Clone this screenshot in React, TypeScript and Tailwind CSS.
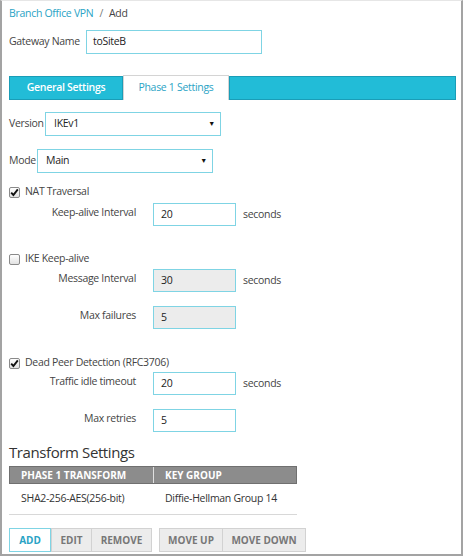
import React from "react";

const font = { fontFamily: '"Open Sans", "Noto Sans", sans-serif' };

function Check({ checked }: { checked: boolean }) {
    return (
        <span className="w-[11px] h-[11px] border border-[#8a8a8a] rounded-[2px] bg-gradient-to-b from-white to-[#e2e2e2] flex items-center justify-center">
            {checked && (
                <svg width="9" height="9" viewBox="0 0 9 9">
                    <path d="M1.2 4.6 L3.4 7 L7.8 1.4" fill="none" stroke="#111" strokeWidth="1.9" />
                </svg>
            )}
        </span>
    );
}

function Field({
    label,
    value,
    disabled,
    unit,
    className,
}: {
    label: string;
    value: string;
    disabled?: boolean;
    unit?: boolean;
    className?: string;
}) {
    return (
        <div className={`flex items-center h-[23px] ${className ?? ""}`}>
            <span className="w-[128px] shrink-0 whitespace-nowrap text-right pr-[1px] -mt-[3px] text-[#444]">{label}</span>
            <div
                className={`ml-[16px] w-[83px] h-[23px] border border-[#7fd4e4] pl-[7px] flex items-center text-[#222] ${
                    disabled ? "bg-[#ececec]" : "bg-white"
                }`}
            >
                {value}
            </div>
            {unit && <span className="ml-[7px] text-[#444]">seconds</span>}
        </div>
    );
}

function Select({ value, width }: { value: string; width: string }) {
    return (
        <div className={`${width} h-[24px] border border-[#7fd4e4] flex items-center pl-[8px] pr-[5px] text-[#222]`}>
            <span className="flex-1">{value}</span>
            <span className="text-[7px] text-[#111]">▼</span>
        </div>
    );
}

export default function App() {
    return (
        <div
            className="w-[463px] h-[556px] bg-white border-t border-t-[#e6e6e6] border-x-2 border-b-2 border-[#a3a3a3] pl-[7px] pr-[4px] text-[10.5px] tracking-[-0.3px] overflow-hidden"
            style={font}
        >
            {/* Breadcrumb */}
            <div className="pt-[4px] h-[20px] leading-[16px]">
                <span className="text-[#2aa3c5]">Branch Office VPN</span>
                <span className="text-[#777] mx-[6px]">/</span>
                <span className="text-[#444]">Add</span>
            </div>

            {/* Gateway name */}
            <div className="mt-[9px] flex items-center h-[24px]">
                <span className="text-[#444] w-[77px] shrink-0 whitespace-nowrap">Gateway Name</span>
                <div className="w-[176px] h-[24px] border border-[#7fd4e4] pl-[6px] flex items-center text-[#222]">
                    toSiteB
                </div>
            </div>

            {/* Tabs */}
            <div className="mt-[21px] flex h-[25px] pr-[1px]">
                <div className="w-[114px] mt-[1px] bg-[#22bcd7] border border-[#1a9db7] flex items-center justify-center text-white font-semibold">
                    General Settings
                </div>
                <div className="w-[106px] bg-white border-x border-t border-[#d4d4d4] flex items-center justify-center text-[#2aa3c5]">
                    Phase 1 Settings
                </div>
                <div className="flex-1 mt-[1px] bg-[#22bcd7] border border-[#1a9db7]"></div>
            </div>

            {/* Version / Mode */}
            <div className="mt-[12px] flex items-center">
                <span className="text-[#444] w-[36px] shrink-0 whitespace-nowrap">Version</span>
                <Select value="IKEv1" width="w-[176px]" />
            </div>
            <div className="mt-[13px] flex items-center">
                <span className="text-[#444] w-[28px] shrink-0 whitespace-nowrap">Mode</span>
                <Select value="Main" width="w-[176px]" />
            </div>

            {/* NAT */}
            <div className="mt-[11px] h-[16px] flex items-center gap-[5px] text-[#444]">
                <Check checked />
                <span>NAT Traversal</span>
            </div>
            <Field className="mt-[3px]" label="Keep-alive Interval" value="20" unit />

            {/* IKE keep-alive */}
            <div className="mt-[25px] h-[16px] flex items-center gap-[5px] text-[#444]">
                <Check checked={false} />
                <span>IKE Keep-alive</span>
            </div>
            <Field className="mt-[2px]" label="Message Interval" value="30" disabled unit />
            <Field className="mt-[14px]" label="Max failures" value="5" disabled />

            {/* DPD */}
            <div className="mt-[26px] h-[16px] flex items-center gap-[5px] text-[#444]">
                <Check checked />
                <span>Dead Peer Detection (RFC3706)</span>
            </div>
            <Field className="mt-[1px]" label="Traffic idle timeout" value="20" unit />
            <Field className="mt-[14px]" label="Max retries" value="5" />

            {/* Transform settings */}
            <div className="mt-[10px] h-[20px] leading-[20px] text-[15px] tracking-[-0.4px] text-[#333]">Transform Settings</div>
            <div className="mt-[4px] w-[288px]">
                <div className="flex h-[18px] bg-[#8c8c8c] border border-[#707070] text-white font-bold text-[10px] tracking-normal">
                    <div className="w-[144px] pl-[11px] flex items-center border-r border-[#e0e0e0]">PHASE 1 TRANSFORM</div>
                    <div className="flex-1 pl-[11px] flex items-center">KEY GROUP</div>
                </div>
                <div className="flex h-[31px] items-center border-b border-[#d8d8d8] text-[#333]">
                    <div className="w-[144px] pl-[12px]">SHA2-256-AES(256-bit)</div>
                    <div className="flex-1 pl-[12px]">Diffie-Hellman Group 14</div>
                </div>
            </div>

            {/* Buttons */}
            <div className="mt-[13px] flex h-[24px] text-[10px] font-bold tracking-normal">
                <button className="w-[42px] border border-[#7fd4e4] bg-white text-[#2aa3c5]">ADD</button>
                <button className="w-[41px] border border-[#d2d2d2] bg-[#ececec] text-[#777]">EDIT</button>
                <button className="w-[60px] border border-l-0 border-[#d2d2d2] bg-[#ececec] text-[#777]">REMOVE</button>
                <button className="ml-[7px] w-[64px] border border-[#d2d2d2] bg-[#ececec] text-[#777]">MOVE UP</button>
                <button className="w-[83px] border border-l-0 border-[#d2d2d2] bg-[#ececec] text-[#777]">MOVE DOWN</button>
            </div>
        </div>
    );
}
